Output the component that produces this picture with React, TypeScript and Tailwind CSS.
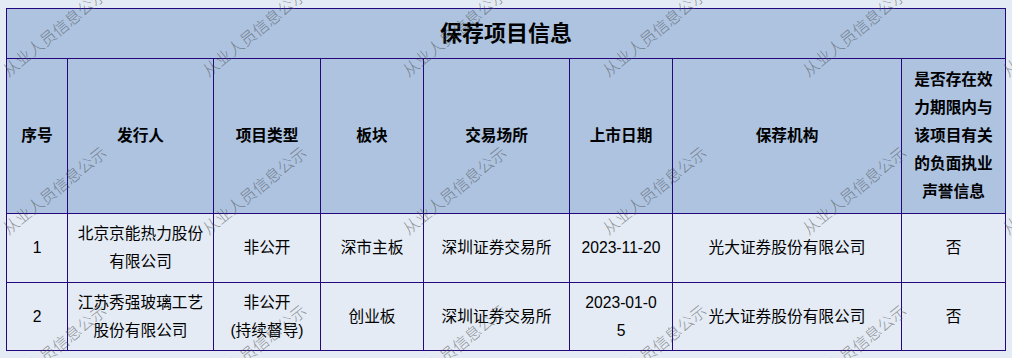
import React from 'react';

const font = { fontFamily: '"Liberation Sans", "Noto Sans CJK SC", sans-serif' };

const headers = ['序号', '发行人', '项目类型', '板块', '交易场所', '上市日期', '保荐机构'];

const rows = [
  {
    no: '1',
    issuer: '北京京能热力股份有限公司',
    type: <>非公开</>,
    board: '深市主板',
    venue: '深圳证券交易所',
    date: <>2023-11-20</>,
    sponsor: '光大证券股份有限公司',
    flag: '否',
  },
  {
    no: '2',
    issuer: '江苏秀强玻璃工艺股份有限公司',
    type: (
      <>
        非公开
        <br />
        (持续督导)
      </>
    ),
    board: '创业板',
    venue: '深圳证券交易所',
    date: (
      <>
        2023-01-0
        <br />5
      </>
    ),
    sponsor: '光大证券股份有限公司',
    flag: '否',
  },
];

// watermark grid, first glyph centre at (10 + 200i, 67 + 158j)
const marks: { x: number; y: number }[] = [];
for (let j = 0; j < 3; j++) {
  for (let i = 0; i < 6; i++) {
    marks.push({ x: 10 + 200 * i, y: 67 + 158 * j });
  }
}

const Watermark = () => (
  <div className="pointer-events-none absolute inset-0 overflow-hidden">
    {marks.map((m, idx) => (
      <span
        key={idx}
        className="absolute origin-left -rotate-[39deg] whitespace-nowrap text-[16px] leading-[16px] font-light text-[rgba(70,70,70,0.55)]"
        style={{ left: m.x - 6, top: m.y + 5 - 8, fontFamily: '"Noto Sans CJK SC", sans-serif' }}
      >
        从业人员信息公示
      </span>
    ))}
  </div>
);

const td = 'border border-[#22087c] text-center align-middle px-2 leading-[28px]';

export default function App() {
  return (
    <div className="relative w-[1012px] h-[358px] overflow-hidden bg-[#e4ebf4] pt-[8px] pl-[6px]" style={font}>
      <table className="table-fixed border-collapse w-[1000px] text-[15.7px] text-black">
        <colgroup>
          <col className="w-[61px]" />
          <col className="w-[146px]" />
          <col className="w-[107px]" />
          <col className="w-[103px]" />
          <col className="w-[146px]" />
          <col className="w-[103px]" />
          <col className="w-[229px]" />
          <col className="w-[104px]" />
        </colgroup>
        <tbody>
          <tr className="h-[50px] bg-[#adc3e0]">
            <td colSpan={8} className={`${td} text-[22px] font-bold`}>
              保荐项目信息
            </td>
          </tr>
          <tr className="h-[155px] bg-[#adc3e0] font-bold">
            {headers.map((h) => (
              <td key={h} className={td}>
                {h}
              </td>
            ))}
            <td className={td}>是否存在效力期限内与该项目有关的负面执业声誉信息</td>
          </tr>
          {rows.map((r, i) => (
            <tr key={r.no} className={i === 0 ? 'h-[69px]' : 'h-[68px]'}>
              <td className={td}>{r.no}</td>
              <td className={td}>{r.issuer}</td>
              <td className={td}>{r.type}</td>
              <td className={td}>{r.board}</td>
              <td className={td}>{r.venue}</td>
              <td className={`${td} px-1`}>{r.date}</td>
              <td className={td}>{r.sponsor}</td>
              <td className={td}>{r.flag}</td>
            </tr>
          ))}
        </tbody>
      </table>
      <Watermark />
    </div>
  );
}
